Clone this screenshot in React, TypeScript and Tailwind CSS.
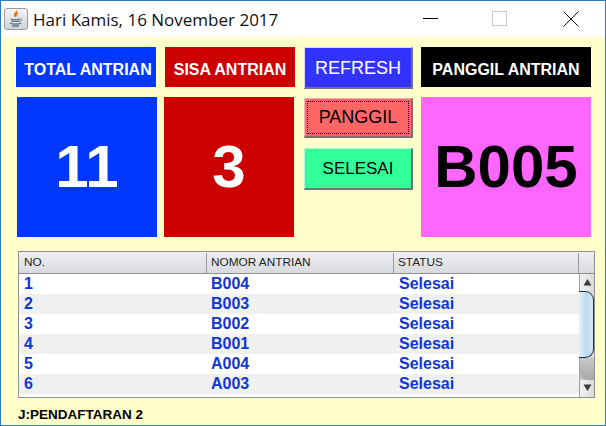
const rows = [
  ["1", "B004", "Selesai"],
  ["2", "B003", "Selesai"],
  ["3", "B002", "Selesai"],
  ["4", "B001", "Selesai"],
  ["5", "A004", "Selesai"],
  ["6", "A003", "Selesai"],
];

const sans = "font-['Liberation_Sans',Arial,sans-serif]";

function JavaIcon() {
  return (
    <div className="flex h-[22px] w-[24px] items-center justify-center rounded-[3px] border border-[#9a9a9a] bg-gradient-to-b from-[#f4f4f4] to-[#cfd3d8]">
      <svg width="18" height="19" viewBox="0 0 18 20" fill="none">
        <path d="M9 1c1 2-3 3.500-2 6 .4 1 1 1.500 1.500 2-.3-1.500 3-3 2-5.500C10 2.500 9.500 1.500 9 1z" fill="#d9731f" />
        <path d="M11.500 4c-1 1-2 2-1.500 4" stroke="#e08a3a" strokeWidth="1" />
        <path d="M3.500 10.500c2.500.8 7 .8 9 0M4 12.500c2 .6 6 .6 8 0" stroke="#5a6f80" strokeWidth="1.200" />
        <path d="M12.500 10.500c2-.5 3 .5 2 1.500-.5.500-1.500 1-2.500 1" stroke="#5a6f80" strokeWidth="1" />
        <path d="M2.500 15c3 1.200 9 1.200 12 0M5 17.500c2 .6 5 .6 7 0" stroke="#5a6f80" strokeWidth="1.200" />
      </svg>
    </div>
  );
}

function Label({ text, className }: { text: string; className: string }) {
  return (
    <div className={`flex h-[40px] items-center justify-center pt-[7px] text-[16px] font-bold text-white ${className}`}>
      {text}
    </div>
  );
}

function Big({ text, className }: { text: string; className: string }) {
  return (
    <div className={`flex h-[140px] items-center justify-center text-[60px] font-bold ${className}`}>
      {text}
    </div>
  );
}

function Scrollbar() {
  return (
    <div className="flex w-[15px] flex-col border-l border-[#a0a0a0] bg-[#e4e4e4]">
      <div className="flex h-[17px] items-center justify-center bg-gradient-to-r from-[#f2f2f2] to-[#dcdcdc]">
        <svg width="9" height="8" viewBox="0 0 9 8"><path d="M4.500 1 8.500 7.500H.5z" fill="#3d3d3d" /></svg>
      </div>
      <div className="flex flex-1 flex-col bg-gradient-to-r from-[#c4c4c4] to-[#dddddd]">
        <div className="-ml-px h-[67px] rounded-r-[9px] border border-l-0 border-[#12304a] bg-gradient-to-r from-[#e8f2fa] via-[#bcd9ee] to-[#d5e6f3]" />
        <div className="flex-1 rounded-bl-[8px] bg-gradient-to-b from-[#c8c8c8] to-[#a8a8a8]" />
      </div>
      <div className="flex h-[17px] items-center justify-center bg-gradient-to-r from-[#f2f2f2] to-[#dcdcdc]">
        <svg width="9" height="8" viewBox="0 0 9 8"><path d="M.5.5h8L4.500 7z" fill="#3d3d3d" /></svg>
      </div>
    </div>
  );
}

export default function App() {
  return (
    <div className={`flex h-[426px] w-[606px] flex-col overflow-hidden border border-[#2c7cb8] bg-[#ffffcc] ${sans}`}>
      <div className="flex h-[36px] items-center bg-white pl-[3px]">
        <JavaIcon />
        <span className="ml-[5px] pt-px font-['Open_Sans',sans-serif] text-[17px] text-[#111]">Hari Kamis, 16 November 2017</span>
        <div className="ml-auto flex h-full items-center">
          <div className="flex w-[45px] justify-center"><div className="h-px w-[15px] bg-black" /></div>
          <div className="ml-[24px] flex w-[45px] justify-center"><div className="h-[15px] w-[15px] border border-[#c8c8c8]" /></div>
          <div className="ml-[26px] flex w-[45px] justify-center">
            <svg width="16" height="16" viewBox="0 0 16 16"><path d="M.5.5l15 15M15.500.5l-15 15" stroke="#111" strokeWidth="1" /></svg>
          </div>
          <div className="w-[12px]" />
        </div>
      </div>

      <div className="flex flex-1 flex-col">
        <div className="ml-[15px] mt-[10px] flex">
          <div className="w-[148px]">
            <Label text="TOTAL ANTRIAN" className="w-[140px] bg-[#0038ff] pl-[4px]" />
            <Big text="11" className="ml-px mt-[10px] w-[140px] bg-[#0038ff] text-white" />
          </div>
          <div className="w-[140px]">
            <Label text="SISA ANTRIAN" className="ml-px w-[130px] bg-[#cc0000]" />
            <Big text="3" className="mt-[10px] w-[130px] bg-[#cc0000] text-white" />
          </div>
          <div className="flex w-[117px] flex-col">
            <button className="flex h-[42px] w-[109px] items-center justify-center border border-b-2 border-r-2 border-[#d8d8f0] border-b-[#707080] border-r-[#707080] bg-[#3333ff] pt-[3px] text-[18px] text-white">
              REFRESH
            </button>
            <button className="mt-[9px] flex h-[40px] w-[109px] items-center justify-center border border-b-2 border-r-2 border-[#f2b0b0] border-b-[#8a6a6a] border-r-[#8a6a6a] bg-[#ff6666] p-[2px] text-[18px] text-black">
              <span className="flex h-full w-full items-center justify-center border border-dotted border-black">PANGGIL</span>
            </button>
            <button className="mt-[10px] flex h-[42px] w-[109px] items-center justify-center border border-b-2 border-r-2 border-[#b0f5d8] border-b-[#667a70] border-r-[#667a70] bg-[#33ff99] text-[17px] text-black">
              SELESAI
            </button>
          </div>
          <div className="w-[170px]">
            <Label text="PANGGIL ANTRIAN" className="bg-black" />
            <Big text="B005" className="mt-[10px] bg-[#ff66ff] text-[59px] text-black" />
          </div>
        </div>

        <div className="ml-[17px] mt-[14px] flex h-[147px] w-[577px] flex-col border border-[#8f8f8f] bg-white">
          <div className="flex h-[22px] shrink-0 border-b border-[#8f8f8f] bg-gradient-to-b from-[#f0f0f3] to-[#d8dade] pt-px text-[11.800px] text-[#222]">
            <div className="flex w-[188px] items-center border-r border-[#9a9a9a] pl-[5px]">NO.</div>
            <div className="flex w-[187px] items-center border-r border-[#9a9a9a] pl-[4px]">NOMOR ANTRIAN</div>
            <div className="flex w-[185px] items-center border-r border-[#9a9a9a] pl-[4px]">STATUS</div>
          </div>
          <div className="flex flex-1">
            <div className="flex-1">
              {rows.map((row, i) => (
                <div
                  key={row[0]}
                  className={`flex h-[20px] items-center pt-px text-[16px] font-bold text-[#0f37d6] ${i % 2 === 1 ? "bg-[#f0f0f0]" : "bg-white"}`}
                >
                  <div className="w-[188px] pl-[5px]">{row[0]}</div>
                  <div className="w-[187px] pl-[4px]">{row[1]}</div>
                  <div className="pl-[5px]">{row[2]}</div>
                </div>
              ))}
            </div>
            <Scrollbar />
          </div>
        </div>

        <div className="ml-[17px] mt-[7px] text-[13.500px] font-bold text-black">J:PENDAFTARAN 2</div>
      </div>
    </div>
  );
}
